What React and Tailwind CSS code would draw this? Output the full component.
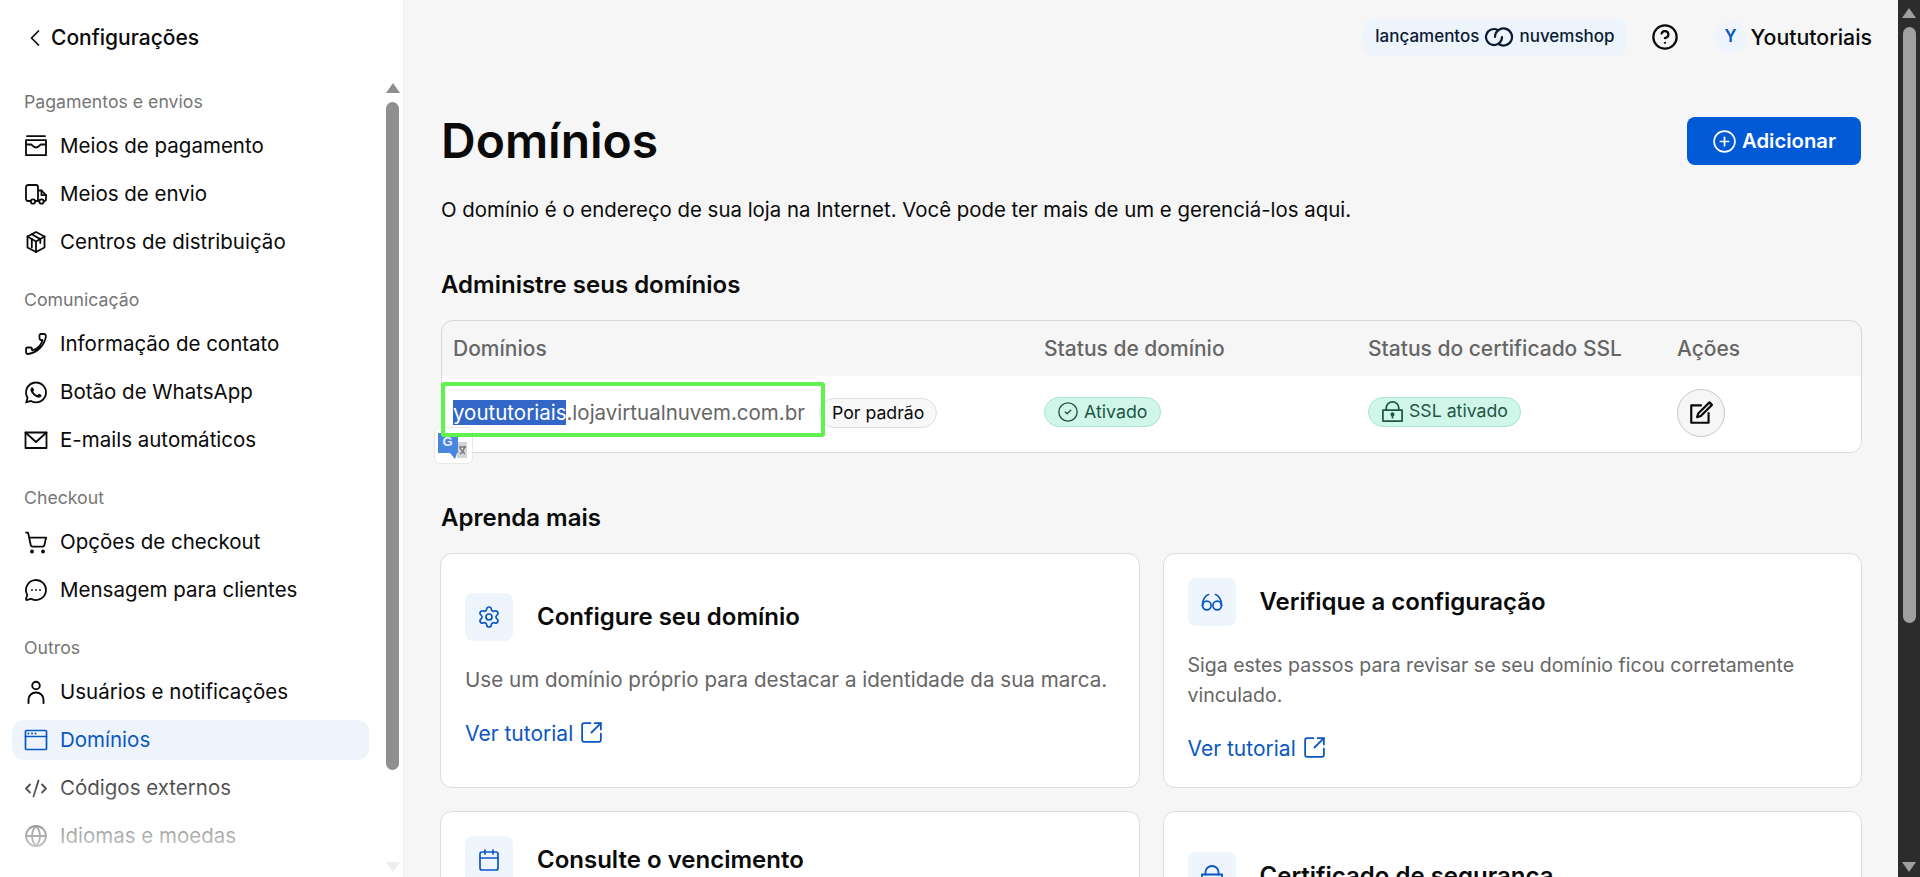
import React from "react";
import { ChevronLeft, ShoppingCart, MessageCircleMore, CodeXml, Globe, CircleHelp, CirclePlus, CircleCheck, Settings, Calendar, SquareArrowOutUpRight } from "lucide-react";
import { FaWhatsapp } from "react-icons/fa";

const S = ({ children, w = 1.8, size = 24 }) => (
  <svg width={size} height={size} viewBox="0 0 24 24" fill="none" stroke="currentColor" strokeWidth={w} strokeLinejoin="round" strokeLinecap="round">
    {children}
  </svg>
);
const Tray = () => (
  <S>
    <path d="M3 2.200h18M2 6.200h20v15H2z" />
    <path d="M2 10.500h5c1 0 2 3 5 3s4-3 5-3h5" />
  </S>
);
const TruckIcon = () => (
  <S>
    <path d="M6.800 19H4a2 2 0 0 1-2-2V5a2 2 0 0 1 2-2h8a2 2 0 0 1 2 2v14h-2.800" />
    <path d="M14 8.500h3.500l4.500 4.700V17a2 2 0 0 1-2 2M14 19h.8" />
    <path d="M17.500 8.500v4.700H22" />
    <circle cx="9" cy="19.500" r="2.200" />
    <circle cx="17.500" cy="19.500" r="2.200" />
  </S>
);
const Cube = () => (
  <S>
    <path d="M12 2l8.500 4.500v11L12 22l-8.500-4.500v-11z" />
    <path d="M3.500 6.500l8.500 5 8.500-5M12 11.500V22" />
    <path d="M7.800 4.300l8.500 4.800v4" />
    <path d="M7.800 9.200v8.300" />
  </S>
);
const PhoneIcon = () => (
  <S>
    <path d="M2 19.500V17c0-.8.600-1.500 1.500-1.500h3c.8 0 1.500.7 1.500 1.500v1c0 .3.300.5.600.4C13 17 17 13 18.500 8.500c.1-.3-.1-.5-.4-.5H17c-.8 0-1.500-.7-1.500-1.500v-3c0-.8.700-1.500 1.500-1.500h3c1 0 2 .8 1.900 2C21 13 13 21 4 22c-1.200.1-2-.8-2-2.500z" />
  </S>
);
const MailIcon = () => (
  <S><path d="M1.500 4.500h21v15.500h-21z" /><path d="M1.500 4.500L12 14l10.500-9.500" /></S>
);
const UserIcon = () => (
  <S w={1.9}>
    <circle cx="12" cy="5.500" r="3.800" />
    <path d="M4.500 23v-3.500a7.500 7 0 0 1 15 0V23" />
  </S>
);
const WindowIcon = () => (
  <S w={1.7}>
    <rect x="1.500" y="2.500" width="21" height="19" rx="1" />
    <path d="M1.500 8.500h21" />
    <path d="M4.500 5.500h.01M8 5.500h.01M11.500 5.500h.01" strokeWidth="2" />
  </S>
);
const Clouds = () => (
  <svg width="30" height="24" viewBox="0 0 30 24" fill="none" stroke="#0a1a33" strokeWidth="2.200" strokeLinecap="round">
    <path d="M14 5.100A8 8 0 1 0 18 12" />
    <path d="M11 12a8.500 8.500 0 1 1 4 7.200" />
  </svg>
);
const LockIcon = ({ size = 24 }) => (
  <S size={size}>
    <path d="M5.500 10.500V8a6.500 6 0 0 1 13 0v2.500" />
    <path d="M2 10.500h20V22H2z" />
    <circle cx="12" cy="15" r="1.200" fill="currentColor" />
    <path d="M12 15v3.500" />
  </S>
);
const Specs = () => (
  <S w={1.7}>
    <circle cx="6.800" cy="15.500" r="4.300" />
    <circle cx="17.200" cy="15.500" r="4.300" />
    <path d="M2.500 15.500C2.500 10 5 5.500 8.500 4.500" />
    <path d="M21.500 15.500C21.500 10 19 5.500 15.500 4.500" />
  </S>
);
const EditIcon = () => (
  <S w={2} size={26}>
    <path d="M12 5H3v16h16v-9" />
    <path d="M19.800 2.200l2.300 2.300L11.800 14.800l-3.400 1 1-3.400z" />
  </S>
);

const sections = [
  { title: "Pagamentos e envios", items: [
    [<Tray />, "Meios de pagamento"],
    [<TruckIcon />, "Meios de envio"],
    [<Cube />, "Centros de distribuição"],
  ]},
  { title: "Comunicação", items: [
    [<PhoneIcon />, "Informação de contato"],
    [<FaWhatsapp size={25} />, "Botão de WhatsApp"],
    [<MailIcon />, "E-mails automáticos"],
  ]},
  { title: "Checkout", items: [
    [<ShoppingCart size={25} strokeWidth={1.8} />, "Opções de checkout"],
    [<MessageCircleMore size={24} strokeWidth={1.8} />, "Mensagem para clientes"],
  ]},
  { title: "Outros", items: [
    [<UserIcon />, "Usuários e notificações"],
    [<WindowIcon />, "Domínios", true],
    [<CodeXml size={25} strokeWidth={1.8} />, "Códigos externos"],
    [<Globe size={24} strokeWidth={1.8} />, "Idiomas e moedas"],
  ]},
];

function Sidebar() {
  return (
    <aside className="relative w-[404px] shrink-0 h-full overflow-hidden bg-white border-r border-[#f1f1f1]">
      <div className="h-[75px] flex items-center pl-[21px] gap-[2px] text-[#0a0a0a]">
        <ChevronLeft size={28} strokeWidth={1.5} />
        <span className="text-[21px] font-medium">Configurações</span>
      </div>
      <nav className="pt-[13px] flex flex-col gap-[24px]">
        {sections.map((s) => (
          <div key={s.title} className="flex flex-col">
            <div className="pl-[24px] h-[28px] leading-[28px] text-[17.7px] text-[#767676] mb-[10px]">{s.title}</div>
            <div className="flex flex-col gap-[8px]">
              {s.items.map(([icon, label, active]) => (
                <div key={label} className={active
                  ? "mx-[12px] w-[357px] px-[12px] h-[40px] rounded-[12px] flex items-center gap-[12px] bg-[#edf4fc] text-[#0b57c2]"
                  : "mx-[12px] w-[357px] px-[12px] h-[40px] flex items-center gap-[12px] text-[#0a0a0a]"}>
                  <span className="w-[24px] h-[24px] flex items-center justify-center shrink-0">{icon}</span>
                  <span className="text-[20.5px] whitespace-nowrap">{label}</span>
                </div>
              ))}
            </div>
          </div>
        ))}
      </nav>
      <div className="absolute left-0 right-0 bottom-0 h-[125px] bg-gradient-to-b from-white/0 to-white" />
      <div className="absolute left-[386px] top-[83px] w-0 h-0 border-l-[7px] border-r-[7px] border-b-[10px] border-l-transparent border-r-transparent border-b-[#8f8f8f]" />
      <div className="absolute left-[386px] top-[102px] w-[13px] h-[668px] rounded-full bg-[#8f8f8f]" />
      <div className="absolute left-[386px] top-[862px] w-0 h-0 border-l-[7px] border-r-[7px] border-t-[10px] border-l-transparent border-r-transparent border-t-[#eeeeee]" />
    </aside>
  );
}

function TutorialLink() {
  return (
    <a className="h-[30px] flex items-center gap-[6px] text-[21px] text-[#0b57c2]">
      Ver tutorial
      <SquareArrowOutUpRight size={25} strokeWidth={1.7} className="-mt-[3px]" />
    </a>
  );
}

function Tile({ children }) {
  return <div className="w-[48px] h-[48px] rounded-[8px] bg-[#eff5fc] text-[#0b57c2] flex items-center justify-center shrink-0">{children}</div>;
}

function Card({ icon, title, desc, link = true, className, descClass }) {
  return (
    <div className={"bg-white border border-[#dcdcdc] rounded-[12px] px-[24px] h-[235px] flex flex-col " + className}>
      <div className="flex items-center gap-[24px]">
        <Tile>{icon}</Tile>
        <div className="text-[24px] font-semibold text-[#0a0a0a] whitespace-nowrap">{title}</div>
      </div>
      {desc && <p className={"mt-[24px] leading-[30px] text-[#666666] " + descClass}>{desc}</p>}
      {link && <div className="mt-[24px]"><TutorialLink /></div>}
    </div>
  );
}

function Main() {
  return (
    <main className="flex-1 min-w-0 h-full overflow-hidden bg-[#f6f6f6] relative">
      <div className="h-[74px] flex items-center justify-end pr-[26px]">
        <div className="h-[37px] px-[12px] rounded-[10px] bg-[#eef4fc] flex items-center gap-[5px] text-[17px] font-medium text-[#0a1a33]">
          lançamentos<Clouds />nuvemshop
        </div>
        <CircleHelp size={28} strokeWidth={1.9} className="ml-[24px] text-[#0a0a0a]" />
        <div className="ml-[36px] w-[32px] h-[32px] rounded-full bg-[#eef4fc] text-[#0b57c2] font-semibold text-[17px] flex items-center justify-center">Y</div>
        <span className="ml-[4px] mt-[1px] text-[21.3px] font-medium text-[#0a0a0a]">Yoututoriais</span>
      </div>

      <div className="pl-[37px] pr-[36px]">
        <div className="mt-[43px] h-[48px] flex items-center justify-between">
          <h1 className="text-[48px] font-semibold leading-[48px] text-[#0a0a0a]">Domínios</h1>
          <button className="h-[48px] w-[174px] mr-[1px] rounded-[8px] bg-[#0059d5] text-white flex items-center justify-center gap-[5px] text-[20.3px] font-semibold">
            <CirclePlus size={25} strokeWidth={1.6} />Adicionar
          </button>
        </div>
        <p className="mt-[30px] text-[20.4px] leading-[30px] text-[#0a0a0a]">O domínio é o endereço de sua loja na Internet. Você pode ter mais de um e gerenciá-los aqui.</p>
        <h2 className="mt-[45px] text-[24px] leading-[30px] font-semibold text-[#0a0a0a]">Administre seus domínios</h2>

        <div className="relative mt-[20px]">
          <div className="border border-[#d8d8d8] rounded-[12px] overflow-hidden">
            <div className="grid grid-cols-[591px_324px_309px_1fr] h-[55px] items-center pl-[11px] text-[21px] font-medium text-[#666666]">
              <div>Domínios</div>
              <div>Status de domínio</div>
              <div>Status do certificado SSL</div>
              <div>Ações</div>
            </div>
            <div className="grid grid-cols-[591px_324px_309px_1fr] h-[76px] items-center pl-[11px] bg-white">
              <div className="flex items-center gap-[14px] -mt-[2px]">
                <div className="-mt-[1px] text-[20.5px] leading-[30px] text-[#666666] whitespace-nowrap">
                  <span className="bg-[#3367c7] text-white">yoututoriais</span>.lojavirtualnuvem.com.br
                </div>
                <span className="h-[30px] px-[12px] rounded-full border border-[#e0e0e0] bg-[#f8f8f8] text-[17.7px] text-[#0a0a0a] flex items-center">Por padrão</span>
              </div>
              <div className="-mt-[2px]">
                <span className="inline-flex items-center gap-[5px] h-[30px] px-[12px] rounded-full bg-[#cff6e8] border border-[#a8e8d2] text-[17.8px] text-[#1d5546]">
                  <CircleCheck size={22} strokeWidth={1.5} />Ativado
                </span>
              </div>
              <div className="-mt-[2px]">
                <span className="inline-flex items-center gap-[5px] h-[30px] px-[12px] rounded-full bg-[#cff6e8] border border-[#a8e8d2] text-[17.7px] text-[#1d5546]">
                  <LockIcon size={23} />SSL ativado
                </span>
              </div>
              <div className="-mt-[2px]">
                <div className="w-[48px] h-[48px] rounded-full border border-[#c8c8c8] bg-[#f6f6f6] flex items-center justify-center text-[#0a0a0a]">
                  <EditIcon />
                </div>
              </div>
            </div>
          </div>
          <div className="absolute left-[-7px] top-[107px] w-[39px] h-[37px] rounded-[6px] bg-white/90 border border-[#e8e8e8] flex items-center justify-center">
            <svg width="32" height="32" viewBox="0 0 32 32">
              <rect x="19" y="12" width="10" height="16" fill="#d4d4d4" />
              <path d="M21 17h7M22 24c3-2 4-4 5-8M22 18c1 2 3 4 5 6" stroke="#777" strokeWidth="1.300" fill="none" />
              <path d="M0 3h20v20h-1l-2 6-5-6H0z" fill="#4a86e0" />
              <text x="9.500" y="16" fontSize="13" fontWeight="700" fill="#e8f0fc" textAnchor="middle" fontFamily="Liberation Sans, sans-serif">G</text>
            </svg>
          </div>
          <div className="absolute left-0 top-[62px] w-[384px] h-[55px] border-[4px] border-[#62f24f] rounded-[3px]" />
        </div>

        <h2 className="mt-[50px] text-[24px] leading-[30px] font-semibold text-[#0a0a0a]">Aprenda mais</h2>
        <div className="mt-[20px] -ml-[1px] grid grid-cols-2 gap-x-[23px] gap-y-[23px]">
          <Card className="justify-center" descClass="text-[20.6px]" icon={<Settings size={24} strokeWidth={1.7} />} title="Configure seu domínio" desc="Use um domínio próprio para destacar a identidade da sua marca." />
          <Card className="justify-center" descClass="text-[19.5px]" icon={<Specs />} title="Verifique a configuração" desc="Siga estes passos para revisar se seu domínio ficou corretamente vinculado." />
          <Card className="pt-[24px]" link={false} icon={<Calendar size={24} strokeWidth={1.7} />} title="Consulte o vencimento" />
          <Card className="pt-[40px]" link={false} icon={<LockIcon size={24} />} title="Certificado de segurança" />
        </div>
      </div>
    </main>
  );
}

function PageScrollbar() {
  return (
    <div className="w-[22px] shrink-0 h-full bg-[#2c2c2c] flex flex-col items-center">
      <div className="mt-[8px] w-0 h-0 border-l-[7px] border-r-[7px] border-b-[10px] border-l-transparent border-r-transparent border-b-[#a0a0a0]" />
      <div className="mt-[9px] w-[13px] h-[596px] rounded-full bg-[#a0a0a0]" />
      <div className="mt-auto mb-[5px] w-0 h-0 border-l-[7px] border-r-[7px] border-t-[10px] border-l-transparent border-r-transparent border-t-[#a0a0a0]" />
    </div>
  );
}

export default function App() {
  return (
    <div className="flex w-[1920px] h-[877px] overflow-hidden font-[Inter,sans-serif]">
      <Sidebar />
      <Main />
      <PageScrollbar />
    </div>
  );
}
